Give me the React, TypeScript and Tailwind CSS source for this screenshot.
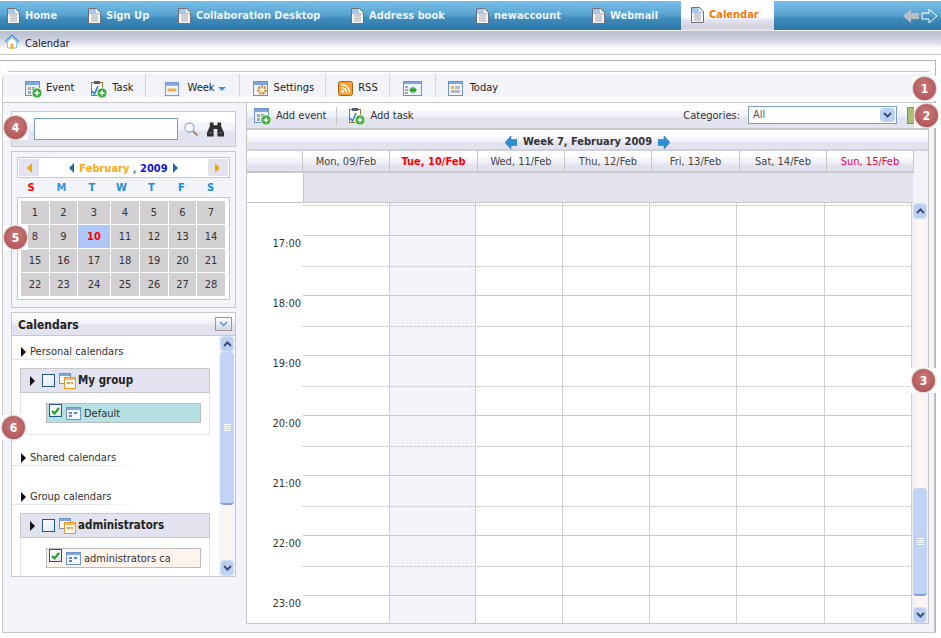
import React from "react";

const font = { fontFamily: '"DejaVu Sans Condensed", "DejaVu Sans", sans-serif' };

const DocIcon = () => (
  <svg width="15" height="16" viewBox="0 0 15 16" className="shrink-0">
    <path d="M1.5.5h8l4 4v11h-12z" fill="#f7f7f7" stroke="#6f6f78" />
    <path d="M2 1h7v4h4v1H2z" fill="#a9c8ec" />
    <path d="M4 7h7M4 9h7M4 11h7M4 13h7" stroke="#a8a8b0" />
  </svg>
);

const AddBadge = () => (
  <g>
    <circle cx="13" cy="13" r="5" fill="#3aa93a" stroke="#d9f2d0" />
    <path d="M13 10.5v5M10.5 13h5" stroke="#fff" strokeWidth="1.6" />
  </g>
);

const CalBase = ({ children }: { children?: React.ReactNode }) => (
  <>
    <rect x="1.5" y="1.5" width="14" height="14" fill="#eef3fb" stroke="#6d94c8" />
    <rect x="2" y="2" width="13" height="3" fill="#7ea7dc" />
    {children}
  </>
);

const EventIcon = () => (
  <svg width="18" height="18" viewBox="0 0 18 18" className="shrink-0">
    <CalBase>
      <path d="M4 7h3v3H4zM8 7h3v3H8zM4 11h3v3H4z" fill="#a9a9b4" />
    </CalBase>
    <AddBadge />
  </svg>
);

const TaskIcon = () => (
  <svg width="18" height="18" viewBox="0 0 18 18" className="shrink-0">
    <rect x="2.5" y="2.5" width="11" height="13" fill="#fffdf8" stroke="#a5703c" />
    <rect x="5" y="1" width="6" height="3" fill="#55606e" />
    <path d="M3 11l2.5 3L9 6" fill="none" stroke="#2a80d0" strokeWidth="1.6" />
    <AddBadge />
  </svg>
);

const WeekIcon = () => (
  <svg width="16" height="16" viewBox="0 0 17 17" className="shrink-0">
    <CalBase>
      <rect x="4" y="8" width="9" height="3" fill="#f3a93c" />
    </CalBase>
  </svg>
);

const SettingsIcon = () => (
  <svg width="17" height="17" viewBox="0 0 17 17" className="shrink-0">
    <CalBase>
      <circle cx="10" cy="10" r="3.5" fill="none" stroke="#c98a2a" strokeWidth="2.4" strokeDasharray="2 1" />
      <circle cx="10" cy="10" r="1.2" fill="#f6e3b0" />
    </CalBase>
  </svg>
);

const RssIcon = () => (
  <svg width="15" height="15" viewBox="0 0 15 15" className="shrink-0">
    <rect x=".5" y=".5" width="14" height="14" rx="2" fill="#f7a233" stroke="#a8611b" />
    <circle cx="4.5" cy="10.5" r="1.4" fill="#fff" />
    <path d="M3.5 6.5a5 5 0 015 5M3.5 3.5a8 8 0 018 8" fill="none" stroke="#fff" strokeWidth="1.4" />
  </svg>
);

const ResizeIcon = () => (
  <svg width="19" height="15" viewBox="0 0 19 15" className="shrink-0">
    <rect x=".5" y=".5" width="18" height="14" fill="#eef3fb" stroke="#6d94c8" />
    <rect x="1" y="1" width="17" height="2" fill="#7ea7dc" />
    <path d="M2 5h3v2H2zM2 8h3v2H2zM2 11h3v2H2z" fill="#a9a9b4" />
    <path d="M6 9l3.500-3.500v2h1v-2L14 9l-3.500 3.500v-2h-1v2z" fill="#2da52d" />
  </svg>
);

const TodayIcon = () => (
  <svg width="15" height="15" viewBox="0 0 15 15" className="shrink-0">
    <rect x=".5" y=".5" width="14" height="14" fill="#f4f6fb" stroke="#6d94c8" />
    <rect x="1" y="1" width="13" height="2" fill="#7ea7dc" />
    <rect x="3" y="5" width="3" height="3" fill="#f1b64d" />
    <path d="M7 5h5v3H7zM3 9h9v3H3z" fill="#b8b8c0" />
  </svg>
);

const HouseIcon = () => (
  <svg width="16" height="16" viewBox="0 0 16 16" className="shrink-0">
    <path d="M1 8l7-7 7 7" fill="none" stroke="#4aa3df" strokeWidth="1.5" />
    <path d="M3.5 7.5L8 3l4.500 4.500V14h-9z" fill="#fff" stroke="#8fc3e8" />
    <rect x="6.500" y="10" width="3" height="5" fill="#f2b632" />
  </svg>
);

const Magnifier = () => (
  <svg width="16" height="16" viewBox="0 0 16 16">
    <circle cx="6.500" cy="6.500" r="4.500" fill="#fff" stroke="#8fb3d6" strokeWidth="1.300" />
    <path d="M10 10l4.500 4.500" stroke="#b58a5a" strokeWidth="2" />
  </svg>
);

const Binoculars = () => (
  <svg width="17" height="17" viewBox="0 0 18 17">
    <path d="M3 1h4v3h4V1h4v4l3 7v4h-7V8H7v8H0v-4l3-7z" fill="#2f2f33" />
    <path d="M2 12h3M13 12h3" stroke="#77777f" />
  </svg>
);

const CalMini = () => (
  <svg width="15" height="13" viewBox="0 0 15 13" className="shrink-0">
    <rect x=".5" y=".5" width="14" height="12" fill="#f4f6fb" stroke="#6d94c8" />
    <rect x="1" y="1" width="13" height="2" fill="#7ea7dc" />
    <path d="M3 5h3v2H3zM8 5h3v2H8zM3 8h3v2H3z" fill="#5d86bd" />
  </svg>
);

const CalPair = () => (
  <svg width="17" height="16" viewBox="0 0 17 16" className="shrink-0">
    <rect x=".5" y=".5" width="11" height="10" fill="#f4f6fb" stroke="#6d94c8" />
    <rect x="1" y="1" width="10" height="2" fill="#7ea7dc" />
    <rect x="5.500" y="4.500" width="11" height="11" fill="#fff8ea" stroke="#e79a2b" />
    <rect x="6" y="5" width="10" height="2" fill="#f5bb5e" />
    <path d="M8 9h3v2H8zM12 9h2v2h-2z" fill="#e7a03f" />
  </svg>
);

const Caret = () => <span className="h-0 w-0 shrink-0 border-y-[5px] border-l-[5px] border-y-transparent border-l-[#111]" />;

const Check = ({ on }: { on?: boolean }) => (
  <span className="flex h-[13px] w-[13px] shrink-0 items-center justify-center border border-[#235a85] bg-gradient-to-br from-white to-[#dfe4f2]">
    {on && (
      <svg width="9" height="8" viewBox="0 0 9 8">
        <path d="M1 4l2.500 2.500L8 1" fill="none" stroke="#1f9d1f" strokeWidth="2" />
      </svg>
    )}
  </span>
);

const BlueArrow = ({ left }: { left?: boolean }) => (
  <svg width="12" height="13" viewBox="0 0 12 13">
    <path d={left ? "M0 6.500L6 0v3.500h6v6H6V13z" : "M12 6.500L6 0v3.500H0v6h6V13z"} fill="#2f8fd0" stroke="#1c6ca8" strokeWidth=".5" />
  </svg>
);

const Badge = ({ n, className }: { n: number; className: string }) => (
  <div className={`absolute flex h-[25px] w-[25px] items-center justify-center bg-white ${className}`}>
    <span className="flex h-[23px] w-[23px] items-center justify-center rounded-full bg-[radial-gradient(circle_at_50%_40%,#c97a7a,#b45a5c_70%,#8f4a4c)] text-[12px] font-bold text-white shadow-[0_0_2px_#777]">
      {n}
    </span>
  </div>
);

const ScrollBtn = ({ up }: { up?: boolean }) => (
  <div className="flex h-[16px] w-[14px] shrink-0 items-center justify-center rounded-sm border border-[#d5e0f5] bg-[#bcd0f4]">
    <svg width="9" height="6" viewBox="0 0 9 6">
      <path d={up ? "M1 5l3.500-3.500L8 5" : "M1 1l3.500 3.500L8 1"} fill="none" stroke="#3d4f74" strokeWidth="2" />
    </svg>
  </div>
);

const Thumb = ({ className }: { className: string }) => (
  <div className={`flex w-[14px] items-center justify-center rounded-sm border-b-2 border-b-[#7fa0dc] bg-[#c2d3f8] ${className}`}>
    <div className="flex flex-col gap-[1px]">
      <div className="h-[1px] w-[7px] bg-white" />
      <div className="h-[1px] w-[7px] bg-white" />
      <div className="h-[1px] w-[7px] bg-white" />
      <div className="h-[1px] w-[7px] bg-white" />
    </div>
  </div>
);

const tabs = [
  { label: "Home", w: "w-[81px]" },
  { label: "Sign Up", w: "w-[90px]" },
  { label: "Collaboration Desktop", w: "w-[173px]" },
  { label: "Address book", w: "w-[125px]" },
  { label: "newaccount", w: "w-[116px]" },
  { label: "Webmail", w: "w-[90px]" },
];

const TabBar = () => (
  <div className="flex h-[30px] items-center border-t border-t-white bg-[linear-gradient(#78c0ea,#5aa5d2_45%,#3f8dbd_60%,#2a76a8)] pl-[6px] pr-[4px]">
    {tabs.map((t) => (
      <div key={t.label} className={`flex items-center gap-[4px] ${t.w}`}>
        <DocIcon />
        <span className="whitespace-nowrap pt-[1px] text-[11px] font-bold text-[#eaf4fb]">{t.label}</span>
      </div>
    ))}
    <div className="flex h-[30px] w-[93px] items-center gap-[4px] self-start bg-[linear-gradient(white,white_50%,#e3e3f0_65%,#d0d0dc_90%,#eee)] pb-[2px] pl-[9px]">
      <DocIcon />
      <span className="text-[11px] font-bold text-[#f57a10]">Calendar</span>
    </div>
    <div className="ml-auto flex items-center gap-[2px]">
      <svg width="16" height="16" viewBox="0 0 16 16">
        <path d="M0 8l8-7v4h8v6H8v4z" fill="#b9bdc6" />
      </svg>
      <svg width="16" height="16" viewBox="0 0 16 16">
        <path d="M16 8L8 1v4H1v6h7v4z" fill="none" stroke="#fff" />
      </svg>
    </div>
  </div>
);

const Crumb = () => (
  <div className="mt-[1px] flex h-[18px] items-start gap-[5px] bg-[linear-gradient(#b9c0d0,#c8ccda_40%,#e3e3f0_70%,#fff)] pl-[4px] pt-[3px]">
    <HouseIcon />
    <span className="pt-[2px] text-[11px] leading-[16px] text-[#222]">Calendar</span>
  </div>
);

const Sep = () => <div className="ml-[11px] mr-[12px] h-[23px] w-[1px] -translate-y-[3px] bg-[#d4d4dc]" />;

const Toolbar = () => (
  <div className="flex h-[23px] items-center bg-[#f3f3fa] pl-[21px] pt-[6px] text-[11px] text-[#222]">
    <div className="flex items-center gap-[4px]">
      <EventIcon />
      <span>Event</span>
    </div>
    <div className="ml-[15px] flex items-center gap-[5px]">
      <TaskIcon />
      <span>Task</span>
    </div>
    <Sep />
    <div className="ml-[6px] flex items-center gap-[8px]">
      <WeekIcon />
      <span>Week</span>
      <span className="-ml-[5px] h-0 w-0 border-x-[4px] border-t-[4px] border-x-transparent border-t-[#3f95d6]" />
    </div>
    <div className="ml-[2px]">
      <Sep />
    </div>
    <div className="flex items-center gap-[5px]">
      <SettingsIcon />
      <span>Settings</span>
    </div>
    <Sep />
    <div className="flex items-center gap-[5px]">
      <RssIcon />
      <span>RSS</span>
    </div>
    <Sep />
    <div className="ml-[1px]">
      <ResizeIcon />
    </div>
    <div className="ml-[2px]">
      <Sep />
    </div>
    <div className="flex items-center gap-[7px]">
      <TodayIcon />
      <span>Today</span>
    </div>
  </div>
);

const SearchPanel = () => (
  <div className="flex h-[36px] items-center border border-[#c8c8c8] bg-[linear-gradient(white,white_25%,#f3f3fa_35%,#f3f3fa_50%,#e3e3f0_60%)] pl-[22px]">
    <div className="h-[22px] w-[144px] border border-[#7a9fc0] bg-white" />
    <div className="ml-[5px]">
      <Magnifier />
    </div>
    <div className="ml-[8px]">
      <Binoculars />
    </div>
  </div>
);

const weekdays = [
  { d: "S", c: "text-[#f00]" },
  { d: "M", c: "text-[#3c94d8]" },
  { d: "T", c: "text-[#2a8ccc]" },
  { d: "W", c: "text-[#2a8ccc]" },
  { d: "T", c: "text-[#2a8ccc]" },
  { d: "F", c: "text-[#0a90e0]" },
  { d: "S", c: "text-[#0a90d0]" },
];

const MiniCalendar = () => (
  <div className="mt-[4px] h-[157px] border border-[#c8c8c8] px-[5px] pt-[5px]">
    <div className="flex h-[21px] items-center justify-between border border-[#c8c8c8] bg-white p-[1px]">
      <div className="flex h-[17px] w-[20px] items-center justify-center bg-[#e3e3f0]">
        <span className="h-0 w-0 border-y-[5px] border-r-[5px] border-y-transparent border-r-[#f0a800]" />
      </div>
      <div className="flex items-center gap-[5px] text-[11px] font-bold">
        <span className="h-0 w-0 border-y-[5px] border-r-[5px] border-y-transparent border-r-[#1c6ca8]" />
        <span className="pt-[3px] text-[#ffa812]">
          February <span className="text-[#2a8ccc]">,</span> <span className="text-[#1414e0]">2009</span>
        </span>
        <span className="h-0 w-0 border-y-[5px] border-l-[5px] border-y-transparent border-l-[#1c6ca8]" />
      </div>
      <div className="flex h-[17px] w-[20px] items-center justify-center bg-[#e3e3f0]">
        <span className="h-0 w-0 border-y-[5px] border-l-[5px] border-y-transparent border-l-[#f0a800]" />
      </div>
    </div>
    <div className="-ml-[1px] grid h-[19px] grid-cols-[30px_31px_30px_29px_31px_29px_29px] items-center pt-[1px] text-center text-[11px] font-bold">
      {weekdays.map((w, i) => (
        <span key={i} className={w.c}>
          {w.d}
        </span>
      ))}
    </div>
    <div className="grid grid-cols-[28px_27px_32px_28px_28px_27px_28px] gap-[1px] border border-[#c8c8c8] bg-white p-[3px] text-center text-[11px] leading-[24px] text-[#333]">
      {Array.from({ length: 28 }, (_, i) => i + 1).map((n) =>
        n === 10 ? (
          <div key={n} className="h-[23px] bg-[#aec6f8] font-bold text-[#f00]">
            {n}
          </div>
        ) : (
          <div key={n} className="h-[23px] bg-[#d3d0d3]">
            {n}
          </div>
        ),
      )}
    </div>
  </div>
);

const SectionTitle = ({ label, className }: { label: string; className?: string }) => (
  <div className={`flex h-[17px] w-[126px] items-center gap-[4px] bg-[linear-gradient(90deg,#e3e3f0,#e3e3f0_60%,#fff)] bg-[length:100%_1px] bg-bottom bg-no-repeat pl-[9px] text-[11px] text-[#333] ${className ?? ""}`}>
    <Caret />
    <span className="whitespace-nowrap pt-[1px]">{label}</span>
  </div>
);

const GroupBox = ({ label, itemClass, children }: { label: string; itemClass: string; children: React.ReactNode }) => (
  <div className="ml-[8px] w-[190px] border-x border-b border-[#e3e3f0]">
    <div className="-mx-[1px] flex h-[25px] items-center border border-[#c8c8c8] bg-[#e3e3f0] pl-[9px]">
      <Caret />
      <div className="ml-[7px] mr-[4px]">
        <Check />
      </div>
      <CalPair />
      <span className="ml-[2px] pt-[1px] text-[11.500px] font-bold text-[#222]">{label}</span>
    </div>
    <div className="pb-[11px] pl-[25px] pt-[10px]">
      <div className={`flex h-[20px] w-[155px] items-start overflow-hidden border border-[#bbb] pl-[2px] text-[11px] leading-[20px] text-[#333] ${itemClass}`}>
        <Check on />
        <div className="ml-[4px] mr-[3px] mt-[3px]">
          <CalMini />
        </div>
        {children}
      </div>
    </div>
  </div>
);

const CalendarsPanel = () => (
  <div className="mt-[4px] flex h-[265px] flex-col overflow-hidden border border-[#c8c8c8] bg-white">
    <div className="flex h-[23px] shrink-0 items-center justify-between border-b border-b-[#c8c8c8] bg-[linear-gradient(white,#f3f3fa_40%,#e3e3f0_60%)] pl-[6px] pr-[3px]">
      <span className="pt-[2px] text-[12px] font-bold text-[#222]">Calendars</span>
      <div className="flex h-[14px] w-[17px] items-center justify-center border border-[#999] bg-gradient-to-b from-white to-[#d4d4de]">
        <svg width="9" height="6" viewBox="0 0 9 6">
          <path d="M1 1l3.500 3.500L8 1" fill="none" stroke="#4f9ad0" strokeWidth="1.500" />
        </svg>
      </div>
    </div>
    <div className="flex min-h-0 flex-1">
      <div className="min-w-0 flex-1 overflow-hidden">
        <SectionTitle label="Personal calendars" className="mt-[7px]" />
        <div className="mt-[8px]">
          <GroupBox label="My group" itemClass="bg-[#b5e0e4]">
            <span>Default</span>
          </GroupBox>
        </div>
        <SectionTitle label="Shared calendars" className="mt-[14px]" />
        <SectionTitle label="Group calendars" className="mt-[22px]" />
        <div className="mt-[8px]">
          <GroupBox label="administrators" itemClass="bg-[#fff4ec]">
            <span className="w-[86px] overflow-hidden whitespace-nowrap">administrators calendar</span>
          </GroupBox>
        </div>
      </div>
      <div className="flex w-[16px] shrink-0 flex-col items-center bg-[linear-gradient(90deg,#f3f3fa,#fff8ee,#f3f3fa)]">
        <ScrollBtn up />
        <Thumb className="h-[153px]" />
        <div className="flex-1" />
        <ScrollBtn />
      </div>
    </div>
  </div>
);

const headCols = [
  { label: "Mon, 09/Feb", cls: "w-[87px] text-[#444]" },
  { label: "Tue, 10/Feb", cls: "w-[88px] font-bold text-[#f00]" },
  { label: "Wed, 11/Feb", cls: "w-[87px] text-[#444]" },
  { label: "Thu, 12/Feb", cls: "w-[87px] text-[#444]" },
  { label: "Fri, 13/Feb", cls: "w-[88px] text-[#444]" },
  { label: "Sat, 14/Feb", cls: "w-[87px] text-[#444]" },
  { label: "Sun, 15/Feb", cls: "w-[87px] text-[#f0004a]" },
];

const colWidths = ["w-[87px]", "w-[86px]", "w-[87px]", "w-[87px]", "w-[87px]", "w-[88px]", "w-[87px]"];

const hourRows = [
  { time: "", h: "h-[32px]", line: "top-[2px]", first: true },
  { time: "17:00", h: "h-[60px]", line: "top-[30px]" },
  { time: "18:00", h: "h-[60px]", line: "top-[30px]" },
  { time: "19:00", h: "h-[60px]", line: "top-[30px]" },
  { time: "20:00", h: "h-[60px]", line: "top-[30px]" },
  { time: "21:00", h: "h-[60px]", line: "top-[30px]" },
  { time: "22:00", h: "h-[60px]", line: "top-[30px]" },
  { time: "23:00", h: "h-[28px]", line: "hidden" },
];

const WeekGrid = () => (
  <div className="flex min-h-0 flex-1">
    <div className="min-w-0 flex-1 bg-white">
      {hourRows.map((r) => (
        <div key={r.time || "top"} className={`flex overflow-hidden ${r.h}`}>
          <div className="w-[56px] shrink-0 pr-[2px] pt-[2px] text-right text-[11px] leading-[14px] text-[#333]">{r.time}</div>
          <div className={`relative flex flex-1 ${r.first ? "" : "border-t border-t-[#c8c8c8]"}`}>
            {colWidths.map((w, i) => (
              <div key={i} className={`${w} border-r border-r-[#d0d0d0] ${i === 1 ? "bg-[#f3f3f9]" : ""}`} />
            ))}
            <div className={`absolute inset-x-0 border-t border-dotted border-t-[#bbb] ${r.line}`} />
          </div>
        </div>
      ))}
    </div>
    <div className="flex w-[16px] shrink-0 flex-col items-center bg-[linear-gradient(90deg,#eeeef6,#fff8ee,#f3f3fa)]">
      <ScrollBtn up />
      <div className="flex-1" />
      <Thumb className="h-[108px]" />
      <div className="h-[11px]" />
      <ScrollBtn />
    </div>
  </div>
);

const MainPanel = () => (
  <div className="flex w-[683px] shrink-0 flex-col border-x border-b border-[#c8c8c8] bg-white">
    <div className="flex h-[27px] shrink-0 items-center border-b-2 border-b-[#c8c8c8] bg-[linear-gradient(white,white_25%,#f3f3fa_35%,#f3f3fa_50%,#e3e3f0_60%)] pl-[6px] text-[11px] text-[#333]">
      <EventIcon />
      <span className="ml-[5px] pt-[2px]">Add event</span>
      <div className="ml-[10px] mr-[10px] h-[18px] w-[1px] bg-[#c8c8c8]" />
      <TaskIcon />
      <span className="ml-[5px] pt-[2px]">Add task</span>
      <span className="ml-auto pt-[2px]">Categories:</span>
      <div className="mb-[2px] ml-[8px] flex h-[18px] w-[149px] items-center justify-between border border-[#7a9fc0] bg-white pl-[4px] pr-[1px] text-[#555]">
        <span className="pt-[2px]">All</span>
        <div className="flex h-[14px] w-[15px] items-center justify-center rounded-sm bg-[#bcd0f4]">
          <svg width="9" height="6" viewBox="0 0 9 6">
            <path d="M1 1l3.500 3.500L8 1" fill="none" stroke="#3d4f74" strokeWidth="2" />
          </svg>
        </div>
      </div>
      <div className="ml-[10px] mr-[7px] h-[17px] w-[14px] border border-[#8a8a60] bg-[linear-gradient(90deg,#9fbf7c,#e2b45a)]" />
    </div>
    <div className="flex h-[21px] shrink-0 items-center justify-center gap-[6px] border-b-2 border-b-[#d0d0d8] bg-[linear-gradient(white,white_25%,#f3f3fa_45%,#f3f3fa_55%,#e3e3f0_70%)] pt-[6px] text-[11px] font-bold text-[#333]">
      <BlueArrow left />
      <span>Week 7, February 2009</span>
      <BlueArrow />
    </div>
    <div className="flex h-[22px] shrink-0 border-b-2 border-b-[#c8c8c8] bg-[linear-gradient(white,white_25%,#f3f3fa_45%,#f3f3fa_55%,#e3e3f0_70%)] text-[11px]">
      <div className="w-[56px] shrink-0 border-r border-r-[#c8c8c8]" />
      {headCols.map((c) => (
        <div key={c.label} className={`flex items-center justify-center border-r border-r-[#c8c8c8] pt-[3px] ${c.cls}`}>
          {c.label}
        </div>
      ))}
      <div className="-mb-[2px] flex-1 bg-[#f3f3fa]" />
    </div>
    <div className="flex h-[30px] shrink-0">
      <div className="w-[56px] shrink-0 border-b border-b-[#c8c8c8] bg-white" />
      <div className="w-[610px] border-b border-l border-[#c8c8c8] bg-[#e3e3f0]" />
      <div className="flex-1 bg-[#f3f3fa]" />
    </div>
    <WeekGrid />
  </div>
);

export default function App() {
  return (
    <div className="relative h-[638px] w-[941px] overflow-hidden bg-white" style={font}>
      <TabBar />
      <Crumb />
      <div className="mt-[5px] h-[1px] bg-[#c8c8c8]" />
      <div className="mt-[5px] h-[573px] w-[936px] border-r border-t border-[#b4b4b4] pl-[2px] pt-[10px]">
        <div className="h-[562px] w-[933px] rounded-tl-lg rounded-tr-lg border border-[#c8c8c8] bg-[#f3f3fa]">
          <div className="h-[2px] rounded-t-lg bg-white" />
          <Toolbar />
          <div className="h-[5px] bg-white" />
          <div className="flex border-t border-t-[#c8c8c8] pl-[8px]">
            <div className="mt-[8px] w-[225px] shrink-0">
              <SearchPanel />
              <MiniCalendar />
              <CalendarsPanel />
            </div>
            <div className="ml-[10px] h-[521px]">
              <MainPanel />
            </div>
          </div>
        </div>
      </div>
      <Badge n={1} className="left-[912px] top-[76px]" />
      <Badge n={2} className="left-[914px] top-[103px]" />
      <Badge n={3} className="left-[911px] top-[368px]" />
      <Badge n={4} className="left-[3px] top-[115px]" />
      <Badge n={5} className="left-[3px] top-[225px]" />
      <Badge n={6} className="left-[1px] top-[415px]" />
    </div>
  );
}
